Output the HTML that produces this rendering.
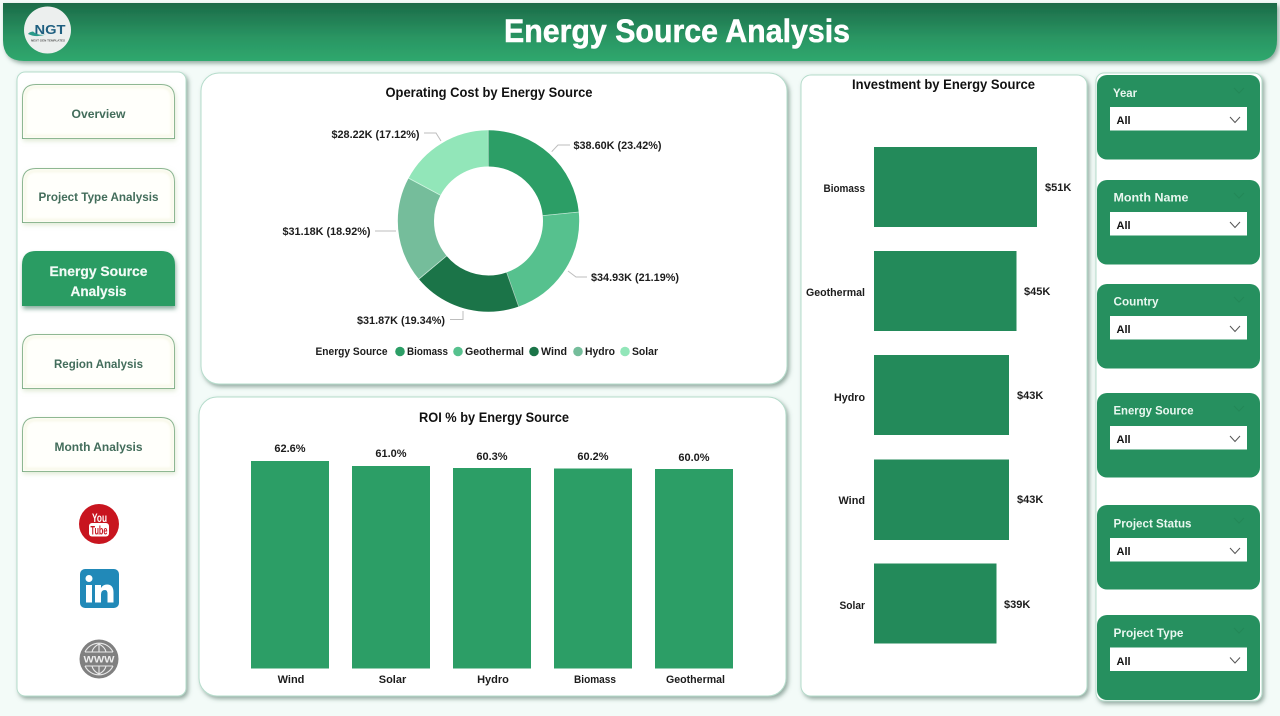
<!DOCTYPE html>
<html lang="en">
<head>
<meta charset="utf-8">
<title>Energy Source Analysis</title>
<style>
html,body{margin:0;padding:0;background:#f3fbf8;width:1280px;height:716px;overflow:hidden}
svg{display:block;font-family:"Liberation Sans",sans-serif;font-weight:bold}
.nav{font-size:12px;fill:#436d5b;text-anchor:middle}
.lab{font-size:11px;fill:#1c1c1c}
.mid{text-anchor:middle}
.end{text-anchor:end}
.tt{font-size:13.5px;fill:#111;text-anchor:middle}
.sl{font-size:12px;fill:#e9f7f0}
.all{font-size:11px;fill:#111}
</style>
</head>
<body>
<svg width="1280" height="716" viewBox="0 0 1280 716" xmlns="http://www.w3.org/2000/svg">
<defs>
<linearGradient id="hd" x1="0" y1="0" x2="0" y2="1"><stop offset="0" stop-color="#1b6b48"/><stop offset=".6" stop-color="#2a9663"/><stop offset="1" stop-color="#2fa86e"/></linearGradient>
<filter id="sh" x="-10%" y="-10%" width="125%" height="125%"><feDropShadow dx="2" dy="2.5" stdDeviation="2" flood-color="#4a6a5c" flood-opacity=".55"/></filter>
<filter id="glow" x="-10%" y="-15%" width="120%" height="135%"><feDropShadow dx="1" dy="2" stdDeviation="2.5" flood-color="#c9dcb8" flood-opacity=".6"/></filter>
<filter id="btn" x="-10%" y="-15%" width="120%" height="135%"><feDropShadow dx="1" dy="3" stdDeviation="2" flood-color="#3e7a60" flood-opacity=".6"/></filter>
<filter id="soft" x="-10%" y="-10%" width="120%" height="120%"><feGaussianBlur stdDeviation="1.200"/></filter>
</defs>

<!-- header -->
<path d="M3 3H1277V40Q1277 61 1256 61H24Q3 61 3 40Z" fill="url(#hd)" filter="url(#sh)"/>
<text x="677" y="42" font-size="32" fill="#fff" stroke="#fff" stroke-width=".5" text-anchor="middle" textLength="346" lengthAdjust="spacingAndGlyphs">Energy Source Analysis</text>
<circle cx="47.500" cy="30" r="23.500" fill="#ecefee"/>
<text x="50" y="34" font-size="13" fill="#1f5f80" text-anchor="middle" textLength="31" lengthAdjust="spacingAndGlyphs">NGT</text>
<path d="M28 34Q36 38 46 34.500Q38 36 33 31.500Q29 32 28 34Z" fill="#2a9a8a"/>
<text x="48" y="41.500" font-size="3" fill="#555" text-anchor="middle">NEXT GEN TEMPLATES</text>

<!-- panels -->
<rect x="17" y="72" width="169" height="624" rx="8" fill="#fff" stroke="#b5dccb" filter="url(#sh)"/>
<rect x="201" y="73" width="586" height="311" rx="18" fill="#fff" stroke="#b5dccb" filter="url(#sh)"/>
<rect x="199" y="397" width="587" height="299" rx="18" fill="#fff" stroke="#b5dccb" filter="url(#sh)"/>
<rect x="801" y="75" width="286" height="621" rx="10" fill="#fff" stroke="#b5dccb" filter="url(#sh)"/>
<rect x="1096" y="73" width="166" height="628" rx="8" fill="#fff" stroke="#b5dccb" filter="url(#sh)"/>

<!-- nav -->
<g fill="#fffffb" stroke="#7fae88" filter="url(#glow)">
<path d="M22.500 138.500V98Q22.500 84.500 36 84.500H161Q174.500 84.500 174.500 98V138.500Z"/>
<path d="M22.500 222.500V182Q22.500 168.500 36 168.500H161Q174.500 168.500 174.500 182V222.500Z"/>
<path d="M22.500 388.500V348Q22.500 334.500 36 334.500H161Q174.500 334.500 174.500 348V388.500Z"/>
<path d="M22.500 471.500V431Q22.500 417.500 36 417.500H161Q174.500 417.500 174.500 431V471.500Z"/>
</g>
<g fill="none" stroke="#f5f6e2" stroke-width="2" filter="url(#soft)">
<path d="M25 136V98Q25 87 36 87H161Q172 87 172 98V136Z"/>
<path d="M25 220V182Q25 171 36 171H161Q172 171 172 182V220Z"/>
<path d="M25 386V348Q25 337 36 337H161Q172 337 172 348V386Z"/>
<path d="M25 469V431Q25 420 36 420H161Q172 420 172 431V469Z"/>
</g>
<path d="M22 306V265Q22 251 36 251H161Q175 251 175 265V306Z" fill="#2c9c64" filter="url(#btn)"/>
<text class="nav" x="98.500" y="118" textLength="54" lengthAdjust="spacingAndGlyphs">Overview</text>
<text class="nav" x="98.500" y="201" textLength="120" lengthAdjust="spacingAndGlyphs">Project Type Analysis</text>
<text x="98.500" y="276" font-size="14" fill="#f2fbf6" stroke="#f2fbf6" stroke-width=".2" text-anchor="middle" textLength="98" lengthAdjust="spacingAndGlyphs">Energy Source</text>
<text x="98.500" y="296" font-size="14" fill="#f2fbf6" stroke="#f2fbf6" stroke-width=".2" text-anchor="middle" textLength="56" lengthAdjust="spacingAndGlyphs">Analysis</text>
<text class="nav" x="98.500" y="368" textLength="89" lengthAdjust="spacingAndGlyphs">Region Analysis</text>
<text class="nav" x="98.500" y="451" textLength="88" lengthAdjust="spacingAndGlyphs">Month Analysis</text>

<!-- social icons -->
<circle cx="99" cy="524" r="20" fill="#c8151f"/>
<text x="99.500" y="522" font-size="12" fill="#fff" text-anchor="middle" textLength="15" lengthAdjust="spacingAndGlyphs">You</text>
<rect x="89" y="523" width="20" height="13.500" rx="3" fill="#fff"/>
<text x="99" y="534.500" font-size="12" fill="#c8151f" text-anchor="middle" textLength="17" lengthAdjust="spacingAndGlyphs">Tube</text>

<rect x="80" y="569" width="39" height="39" rx="5" fill="#2189b8"/>
<circle cx="89" cy="578.500" r="3.500" fill="#fff"/>
<rect x="86" y="585" width="6" height="17.500" fill="#fff"/>
<path d="M95 585H101V588Q103 584.500 107 584.500Q113.500 584.500 113.500 592.500V602.500H107.500V594Q107.500 590 105 590Q101 590 101 594.500V602.500H95Z" fill="#fff"/>

<circle cx="99" cy="659" r="19.500" fill="#808080"/>
<g fill="none" stroke="#e9e9e9" stroke-width="1.100">
<path d="M85 652A15.500 15.500 0 0 1 113 652M85 666A15.500 15.500 0 0 0 113 666"/>
<path d="M99 644V652M99 666V674M92 652Q93 647 99 644Q105 647 106 652M92 666Q93 671 99 674Q105 671 106 666"/>
<path d="M85 652H113M85 666H113"/>
</g>
<text x="99" y="662.500" font-size="9" fill="#eee" text-anchor="middle" textLength="31" lengthAdjust="spacingAndGlyphs">WWW</text>

<!-- donut -->
<text class="tt" x="489" y="97" textLength="207" lengthAdjust="spacingAndGlyphs">Operating Cost by Energy Source</text>
<g transform="rotate(-90 488.500 221)" fill="none" stroke-width="36.200">
<circle cx="488.500" cy="221" r="72.600" pathLength="100" stroke="#2c9e66" stroke-dasharray="23.420 76.580" stroke-dashoffset="0"/>
<circle cx="488.500" cy="221" r="72.600" pathLength="100" stroke="#56c18e" stroke-dasharray="21.190 78.810" stroke-dashoffset="-23.420"/>
<circle cx="488.500" cy="221" r="72.600" pathLength="100" stroke="#1b7448" stroke-dasharray="19.340 80.660" stroke-dashoffset="-44.610"/>
<circle cx="488.500" cy="221" r="72.600" pathLength="100" stroke="#75bd9b" stroke-dasharray="18.920 81.080" stroke-dashoffset="-63.950"/>
<circle cx="488.500" cy="221" r="72.600" pathLength="100" stroke="#92e6b9" stroke-dasharray="17.130 82.870" stroke-dashoffset="-82.870"/>
</g>
<path d="M542.700 215.600L579 212M506.600 272.400L518.700 306.800M446.600 255.900L418.600 279.200M440.500 195.200L408.400 177.900M488.500 166.500V130" stroke="#fff" stroke-opacity=".6" stroke-width=".7" fill="none"/>
<g fill="none" stroke="#bdbdbd" stroke-width="1">
<path d="M551.700 151.700L558 145H570"/>
<path d="M568 271L576 277H587"/>
<path d="M463 311V319.500H450"/>
<path d="M396 231H375"/>
<path d="M441 141L436 133H424"/>
</g>
<text class="lab" x="573.500" y="149" textLength="88" lengthAdjust="spacingAndGlyphs">$38.60K (23.42%)</text>
<text class="lab" x="591" y="281" textLength="88" lengthAdjust="spacingAndGlyphs">$34.93K (21.19%)</text>
<text class="lab" x="357" y="324" textLength="88" lengthAdjust="spacingAndGlyphs">$31.87K (19.34%)</text>
<text class="lab" x="282.500" y="235" textLength="88" lengthAdjust="spacingAndGlyphs">$31.18K (18.92%)</text>
<text class="lab" x="331.500" y="138" textLength="88" lengthAdjust="spacingAndGlyphs">$28.22K (17.12%)</text>

<!-- legend -->
<text class="lab" x="315.500" y="355" textLength="72" lengthAdjust="spacingAndGlyphs">Energy Source</text>
<circle cx="400" cy="351.500" r="4.800" fill="#2c9e66"/>
<text class="lab" x="407" y="355" textLength="41" lengthAdjust="spacingAndGlyphs">Biomass</text>
<circle cx="458" cy="351.500" r="4.800" fill="#56c18e"/>
<text class="lab" x="465" y="355" textLength="59" lengthAdjust="spacingAndGlyphs">Geothermal</text>
<circle cx="534" cy="351.500" r="4.800" fill="#1b7448"/>
<text class="lab" x="541" y="355" textLength="26" lengthAdjust="spacingAndGlyphs">Wind</text>
<circle cx="578" cy="351.500" r="4.800" fill="#75bd9b"/>
<text class="lab" x="585" y="355" textLength="30" lengthAdjust="spacingAndGlyphs">Hydro</text>
<circle cx="625" cy="351.500" r="4.800" fill="#92e6b9"/>
<text class="lab" x="632" y="355" textLength="26" lengthAdjust="spacingAndGlyphs">Solar</text>

<!-- ROI -->
<text class="tt" x="494" y="422" textLength="150" lengthAdjust="spacingAndGlyphs">ROI % by Energy Source</text>
<g fill="#2c9e66">
<rect x="251" y="461" width="78" height="207.500"/>
<rect x="352" y="466" width="78" height="202.500"/>
<rect x="453" y="468" width="78" height="200.500"/>
<rect x="554" y="468.500" width="78" height="200"/>
<rect x="655" y="469" width="78" height="199.500"/>
</g>
<g class="lab">
<text class="mid" x="290" y="452">62.6%</text>
<text class="mid" x="391" y="457">61.0%</text>
<text class="mid" x="492" y="460">60.3%</text>
<text class="mid" x="593" y="460">60.2%</text>
<text class="mid" x="694" y="461">60.0%</text>
<text class="mid" x="291" y="683">Wind</text>
<text class="mid" x="392.500" y="683">Solar</text>
<text class="mid" x="493" y="683">Hydro</text>
<text class="mid" x="595" y="683" textLength="42" lengthAdjust="spacingAndGlyphs">Biomass</text>
<text class="mid" x="695.500" y="683" textLength="59" lengthAdjust="spacingAndGlyphs">Geothermal</text>
</g>

<!-- investment -->
<text class="tt" x="943.500" y="89" textLength="183" lengthAdjust="spacingAndGlyphs">Investment by Energy Source</text>
<g fill="#238a5a">
<rect x="874" y="147" width="163" height="80"/>
<rect x="874" y="251" width="142.500" height="80"/>
<rect x="874" y="355" width="135" height="80"/>
<rect x="874" y="459.500" width="135" height="80.500"/>
<rect x="874" y="563.500" width="122.500" height="80"/>
</g>
<g class="lab">
<text x="823.500" y="192" textLength="41.500" lengthAdjust="spacingAndGlyphs">Biomass</text>
<text x="806" y="296" textLength="59" lengthAdjust="spacingAndGlyphs">Geothermal</text>
<text x="834" y="401" textLength="31" lengthAdjust="spacingAndGlyphs">Hydro</text>
<text x="838.500" y="504" textLength="26.500" lengthAdjust="spacingAndGlyphs">Wind</text>
<text x="839.500" y="609" textLength="25.500" lengthAdjust="spacingAndGlyphs">Solar</text>
<text x="1045" y="191">$51K</text>
<text x="1024" y="295">$45K</text>
<text x="1017" y="399">$43K</text>
<text x="1017" y="503">$43K</text>
<text x="1004" y="608">$39K</text>
</g>

<!-- slicers -->
<g fill="#26905f">
<rect x="1097" y="75" width="163" height="84.500" rx="10"/>
<rect x="1097" y="180" width="163" height="84.500" rx="10"/>
<rect x="1097" y="284" width="163" height="84.500" rx="10"/>
<rect x="1097" y="393" width="163" height="84.500" rx="10"/>
<rect x="1097" y="505" width="163" height="84.500" rx="10"/>
<rect x="1097" y="615" width="163" height="85" rx="10"/>
</g>
<g fill="#fff">
<rect x="1110" y="107" width="137" height="23.500"/>
<rect x="1110" y="212" width="137" height="23.500"/>
<rect x="1110" y="316" width="137" height="23.500"/>
<rect x="1110" y="426" width="137" height="23.500"/>
<rect x="1110" y="538" width="137" height="23.500"/>
<rect x="1110" y="647.500" width="137" height="23.500"/>
</g>
<text class="sl" x="1113" y="97" textLength="24" lengthAdjust="spacingAndGlyphs">Year</text>
<text class="sl" x="1113.500" y="201.500" textLength="75" lengthAdjust="spacingAndGlyphs">Month Name</text>
<text class="sl" x="1113.500" y="305.500" textLength="45" lengthAdjust="spacingAndGlyphs">Country</text>
<text class="sl" x="1113.500" y="414.500" textLength="80" lengthAdjust="spacingAndGlyphs">Energy Source</text>
<text class="sl" x="1113.500" y="527.500" textLength="78" lengthAdjust="spacingAndGlyphs">Project Status</text>
<text class="sl" x="1113.500" y="637" textLength="70" lengthAdjust="spacingAndGlyphs">Project Type</text>
<text class="all" x="1116.500" y="124">All</text>
<text class="all" x="1116.500" y="229">All</text>
<text class="all" x="1116.500" y="333">All</text>
<text class="all" x="1116.500" y="443">All</text>
<text class="all" x="1116.500" y="555">All</text>
<text class="all" x="1116.500" y="665">All</text>
<g fill="none" stroke="#555" stroke-width="1">
<path d="M1230 117L1235 122.500L1240 117"/>
<path d="M1230 222L1235 227.500L1240 222"/>
<path d="M1230 326L1235 331.500L1240 326"/>
<path d="M1230 436L1235 441.500L1240 436"/>
<path d="M1230 548L1235 553.500L1240 548"/>
<path d="M1230 657.500L1235 663L1240 657.500"/>
</g>
<g fill="none" stroke="#238758" stroke-width="1">
<path d="M1234 88L1239 93L1244 88"/>
<path d="M1234 193L1239 198L1244 193"/>
<path d="M1234 297L1239 302L1244 297"/>
<path d="M1234 406L1239 411L1244 406"/>
<path d="M1234 518L1239 523L1244 518"/>
<path d="M1234 628L1239 633L1244 628"/>
</g>
</svg>
</body>
</html>
